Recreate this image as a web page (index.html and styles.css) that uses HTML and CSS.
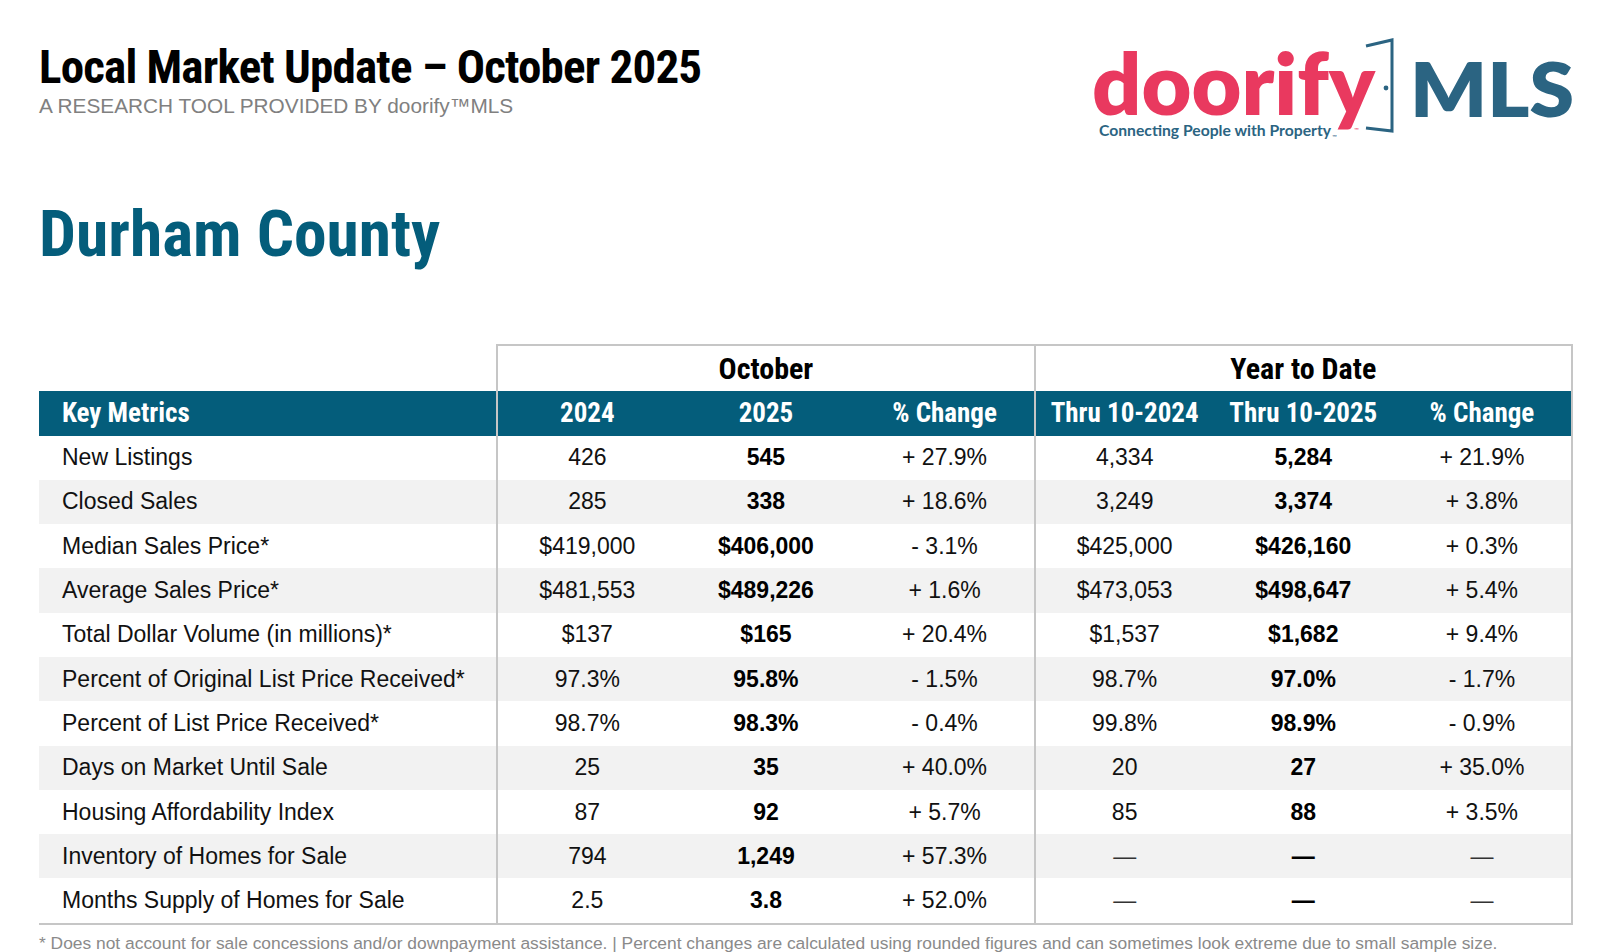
FILE: index.html
```html
<!DOCTYPE html>
<html lang="en">
<head>
<meta charset="utf-8">
<title>Local Market Update – October 2025</title>
<link rel="stylesheet" href="styles.css">
</head>
<body>
<div class="page">
  <header class="top">
    <div class="titles">
      <h1 class="title">Local Market Update – October 2025</h1>
      <p class="subtitle">A RESEARCH TOOL PROVIDED BY doorify™MLS</p>
    </div>
    <div class="logo">
      <svg class="logo-svg" width="482" height="104" viewBox="0 0 482 104">
        <text class="logo-doorify" x="0" y="76" textLength="283" lengthAdjust="spacingAndGlyphs">doorify</text>
        <text class="logo-tm" x="262" y="93">™</text>
        <path class="logo-door" d="M274 7 L300 1 L300 92 L274 89"/>
        <circle class="logo-knob" cx="294" cy="49" r="2.4"/>
        <text class="logo-mls" x="318" y="78" textLength="164" lengthAdjust="spacingAndGlyphs">MLS</text>
        <text class="logo-tag" x="7" y="97" textLength="232" lengthAdjust="spacingAndGlyphs">Connecting People with Property</text>
        <text class="logo-tm2" x="240" y="100">™</text>
      </svg>
    </div>
  </header>

  <h2 class="county">Durham County</h2>

  <table class="metrics">
    <colgroup>
      <col class="c-label"><col class="c-num"><col class="c-num"><col class="c-num"><col class="c-num"><col class="c-num"><col class="c-num">
    </colgroup>
    <thead>
      <tr class="period-row">
        <th class="blank"></th>
        <th class="period" colspan="3">October</th>
        <th class="period" colspan="3">Year to Date</th>
      </tr>
      <tr class="band">
        <th class="label">Key Metrics</th>
        <th class="sep">2024</th><th>2025</th><th>% Change</th>
        <th class="sep">Thru 10-2024</th><th>Thru 10-2025</th><th class="last">% Change</th>
      </tr>
    </thead>
    <tbody>
      <tr><td class="label">New Listings</td><td class="sep">426</td><td class="b">545</td><td>+ 27.9%</td><td class="sep">4,334</td><td class="b">5,284</td><td class="last">+ 21.9%</td></tr>
      <tr><td class="label">Closed Sales</td><td class="sep">285</td><td class="b">338</td><td>+ 18.6%</td><td class="sep">3,249</td><td class="b">3,374</td><td class="last">+ 3.8%</td></tr>
      <tr><td class="label">Median Sales Price*</td><td class="sep">$419,000</td><td class="b">$406,000</td><td>- 3.1%</td><td class="sep">$425,000</td><td class="b">$426,160</td><td class="last">+ 0.3%</td></tr>
      <tr><td class="label">Average Sales Price*</td><td class="sep">$481,553</td><td class="b">$489,226</td><td>+ 1.6%</td><td class="sep">$473,053</td><td class="b">$498,647</td><td class="last">+ 5.4%</td></tr>
      <tr><td class="label">Total Dollar Volume (in millions)*</td><td class="sep">$137</td><td class="b">$165</td><td>+ 20.4%</td><td class="sep">$1,537</td><td class="b">$1,682</td><td class="last">+ 9.4%</td></tr>
      <tr><td class="label">Percent of Original List Price Received*</td><td class="sep">97.3%</td><td class="b">95.8%</td><td>- 1.5%</td><td class="sep">98.7%</td><td class="b">97.0%</td><td class="last">- 1.7%</td></tr>
      <tr><td class="label">Percent of List Price Received*</td><td class="sep">98.7%</td><td class="b">98.3%</td><td>- 0.4%</td><td class="sep">99.8%</td><td class="b">98.9%</td><td class="last">- 0.9%</td></tr>
      <tr><td class="label">Days on Market Until Sale</td><td class="sep">25</td><td class="b">35</td><td>+ 40.0%</td><td class="sep">20</td><td class="b">27</td><td class="last">+ 35.0%</td></tr>
      <tr><td class="label">Housing Affordability Index</td><td class="sep">87</td><td class="b">92</td><td>+ 5.7%</td><td class="sep">85</td><td class="b">88</td><td class="last">+ 3.5%</td></tr>
      <tr><td class="label">Inventory of Homes for Sale</td><td class="sep">794</td><td class="b">1,249</td><td>+ 57.3%</td><td class="sep dash">—</td><td class="b dash">—</td><td class="last dash">—</td></tr>
      <tr><td class="label">Months Supply of Homes for Sale</td><td class="sep">2.5</td><td class="b">3.8</td><td>+ 52.0%</td><td class="sep dash">—</td><td class="b dash">—</td><td class="last dash">—</td></tr>
    </tbody>
  </table>

  <p class="footnote">* Does not account for sale concessions and/or downpayment assistance. | Percent changes are calculated using rounded figures and can sometimes look extreme due to small sample size.</p>
</div>
</body>
</html>
```

FILE: styles.css
```css
html, body {
  margin: 0;
  padding: 0;
  background: #ffffff;
}

.page {
  padding: 0 38px 0 39px;
  font-family: "Liberation Sans", Arial, sans-serif;
  color: #111111;
}

.top {
  display: flex;
  justify-content: space-between;
  align-items: flex-start;
}

.titles {
  padding-top: 43px;
}

.title {
  margin: 0;
  font-family: "Roboto Condensed", Roboto, sans-serif;
  font-stretch: condensed;
  font-weight: 700;
  font-size: 47px;
  line-height: 1;
  letter-spacing: -0.8px;
  color: #000000;
  white-space: nowrap;
}

.subtitle {
  margin: 6px 0 0 0;
  font-size: 20.8px;
  line-height: 1;
  color: #808080;
  white-space: nowrap;
}

.logo {
  padding-top: 39px;
  margin-right: -1px;
}

.logo-svg {
  display: block;
  overflow: visible;
}

.logo-doorify {
  font-family: Lato, "Open Sans", sans-serif;
  font-weight: 800;
  font-size: 86px;
  fill: #e9395f;
}

.logo-mls {
  font-family: Lato, "Open Sans", sans-serif;
  font-weight: 800;
  font-size: 76px;
  fill: #2b6482;
}

.logo-tag {
  font-family: Lato, "Open Sans", sans-serif;
  font-weight: 700;
  font-size: 15px;
  fill: #2b6482;
}

.logo-tm, .logo-tm2 {
  font-family: Lato, sans-serif;
  font-size: 6px;
  fill: #2b6482;
}

.logo-tm {
  fill: #e9395f;
}

.logo-door {
  fill: none;
  stroke: #2b6482;
  stroke-width: 3;
}

.logo-knob {
  fill: #2b6482;
}

.county {
  margin: 58px 0 0 0;
  font-family: "Roboto Condensed", Roboto, sans-serif;
  font-stretch: condensed;
  font-weight: 700;
  font-size: 65.5px;
  line-height: 1;
  color: #045d7b;
}

.metrics {
  margin-top: 77px;
  width: 1534px;
  border-collapse: collapse;
  table-layout: fixed;
}

.c-label { width: 458px; }
.c-num { width: 179px; }

.metrics th,
.metrics td {
  padding: 0;
  text-align: center;
  vertical-align: middle;
  white-space: nowrap;
}

.period-row th {
  height: 45px;
  font-family: "Roboto Condensed", Roboto, sans-serif;
  font-stretch: condensed;
  font-weight: 700;
  font-size: 30px;
  color: #000000;
}

.period-row .period {
  border-top: 2px solid #c6c6c6;
  border-left: 2px solid #c6c6c6;
  border-right: 2px solid #c6c6c6;
}

.band th {
  height: 45px;
  background: #045d7b;
  color: #ffffff;
  font-family: "Roboto Condensed", Roboto, sans-serif;
  font-stretch: condensed;
  font-weight: 700;
  font-size: 27px;
}

.band th.label {
  text-align: left;
  padding-left: 23px;
}

.band th.sep {
  border-left: 2px solid #c6c6c6;
}

.band th.last {
  border-right: 2px solid #c6c6c6;
}

.metrics tbody td {
  height: 44.3px;
  font-size: 23px;
  color: #111111;
}

.metrics tbody tr:nth-child(even) td {
  background: #f2f2f2;
}

.metrics tbody td.label {
  text-align: left;
  padding-left: 23px;
}

.metrics tbody td.sep {
  border-left: 2px solid #c6c6c6;
}

.metrics tbody td.last {
  border-right: 2px solid #c6c6c6;
}

.metrics tbody td.b {
  font-weight: 700;
  color: #000000;
}

.metrics tbody td.dash {
  color: #333333;
}

.metrics tbody td.b.dash {
  color: #000000;
}

.metrics tbody tr:last-child td {
  border-bottom: 2px solid #c6c6c6;
}

.footnote {
  margin: 10px 0 0 0;
  font-size: 17.4px;
  line-height: 1;
  color: #8a8a8a;
  white-space: nowrap;
}
```
